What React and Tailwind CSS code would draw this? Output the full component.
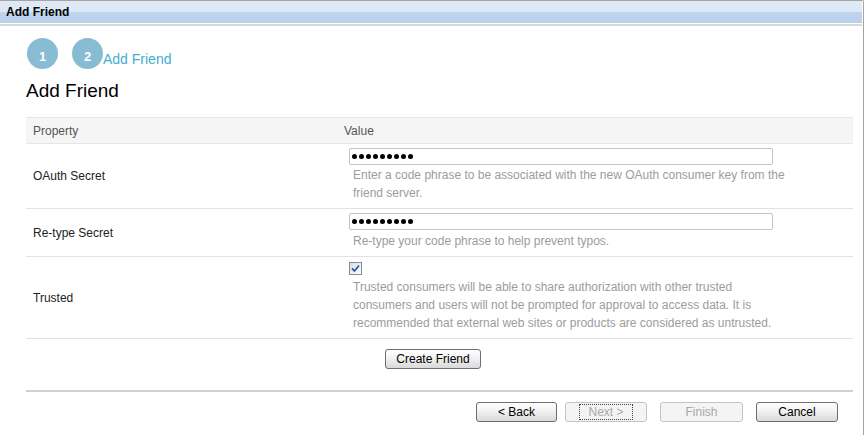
const font = { fontFamily: '"Liberation Sans", Arial, sans-serif' }

function Dots() {
  return (
    <div className="w-[424px] h-[17px] border border-[#c4c4c4] rounded-[2px] bg-white flex items-center gap-[2px] pl-[2px]">
      {Array.from({ length: 9 }).map((_, i) => (
        <span key={i} className="w-[5px] h-[5px] rounded-full bg-black" />
      ))}
    </div>
  )
}

function Btn({ children, disabled, focus, className = '' }) {
  return (
    <button
      className={
        'h-[20px] text-[12px] leading-none rounded-[3px] border flex items-center justify-center ' +
        (disabled
          ? 'border-[#c4c4c4] text-[#a8a8a8] bg-[#f4f4f4] '
          : 'border-[#6e6e6e] text-black bg-[linear-gradient(to_bottom,#ffffff_0%,#f2f2f2_45%,#d9d9d9_100%)] ') +
        className
      }
    >
      {focus ? (
        <span className="border border-dotted border-[#444] px-[8px] h-[16px] flex items-center">{children}</span>
      ) : (
        children
      )}
    </button>
  )
}

function Row({ label, children, className = '' }) {
  return (
    <div className={'flex border-b border-[#e2e2e2] ' + className}>
      <div className="w-[311px] pl-[7px] flex items-center text-[12px] text-[#222]">{label}</div>
      <div className="flex-1 pl-[12px]">{children}</div>
    </div>
  )
}

export default function App() {
  return (
    <div className="w-[866px] h-[435px] bg-white overflow-hidden" style={font}>
      <div className="w-[864px] h-[435px] border-t border-r border-[#a4a4a4] rounded-tr-[2px]">
        <div className="h-[22px] mr-[1px] bg-[linear-gradient(to_bottom,#e0eaf7_0%,#dce7f5_52%,#bfd4ed_52%,#b9d0eb_100%)] flex items-center pl-[6px] text-[12px] font-bold text-black">
          Add Friend
        </div>
        <div className="h-[1px] bg-white" />
        <div className="h-[2px] mr-[1px] bg-[#d8d8d8]" />

        <div className="pl-[27px] mt-[12px] flex items-end">
          <div className="w-[31px] h-[31px] rounded-full bg-[#88bcd2] text-white text-[13px] font-bold flex items-end justify-center pb-[3px]">
            1
          </div>
          <div className="w-[31px] h-[31px] ml-[14px] rounded-full bg-[#88bcd2] text-white text-[13px] font-bold flex items-end justify-center pb-[3px]">
            2
          </div>
          <div className="text-[14px] text-[#43aed2] pb-[3px] leading-none">Add Friend</div>
        </div>

        <div className="pl-[26px] mt-[11px] text-[19px] leading-[22px] text-black">Add Friend</div>

        <div className="mx-[26px] mt-[15px] w-[827px]">
          <div className="flex h-[27px] bg-[#f5f5f5] border-t border-b border-[#e6e6e6] text-[12px] text-[#555]">
            <div className="w-[311px] pl-[7px] flex items-center">Property</div>
            <div className="flex-1 pl-[7px] flex items-center">Value</div>
          </div>

          <Row label="OAuth Secret" className="h-[65px]">
            <div className="pt-[4px]">
              <Dots />
            </div>
            <div className="pl-[4px] mt-[1px] text-[12px] leading-[18px] text-[#9c9c9c]">
              Enter a code phrase to be associated with the new OAuth consumer key from the
              <br />
              friend server.
            </div>
          </Row>

          <Row label="Re-type Secret" className="h-[48px]">
            <div className="pt-[4px]">
              <Dots />
            </div>
            <div className="pl-[4px] mt-[2px] text-[12px] leading-[18px] text-[#9c9c9c]">
              Re-type your code phrase to help prevent typos.
            </div>
          </Row>

          <Row label="Trusted" className="h-[82px]">
            <div className="pt-[5px]">
              <div className="w-[13px] h-[13px] border border-[#7b8fa8] bg-[linear-gradient(to_bottom_right,#dcdcd6,#ffffff)] flex items-center justify-center">
                <svg width="9" height="9" viewBox="0 0 9 9">
                  <path d="M1 4.5 L3.5 7 L8 1.5" fill="none" stroke="#2a5fb0" strokeWidth="1.8" />
                </svg>
              </div>
            </div>
            <div className="pl-[4px] mt-[3px] text-[12px] leading-[18px] text-[#9c9c9c]">
              Trusted consumers will be able to share authorization with other trusted
              <br />
              consumers and users will not be prompted for approval to access data. It is
              <br />
              recommended that external web sites or products are considered as untrusted.
            </div>
          </Row>

          <div className="pl-[359px] pt-[10px]">
            <Btn className="w-[96px]">Create Friend</Btn>
          </div>

          <div className="mt-[21px] h-[2px] bg-[#d0d0d0]" />

          <div className="flex justify-end pr-[15px] mt-[10px] gap-[8px]">
            <Btn className="w-[81px]">&lt; Back</Btn>
            <Btn className="w-[82px]" disabled focus>Next &gt;</Btn>
            <Btn className="w-[83px] ml-[5px]" disabled>Finish</Btn>
            <Btn className="w-[82px] ml-[5px]">Cancel</Btn>
          </div>
        </div>
      </div>
    </div>
  )
}
